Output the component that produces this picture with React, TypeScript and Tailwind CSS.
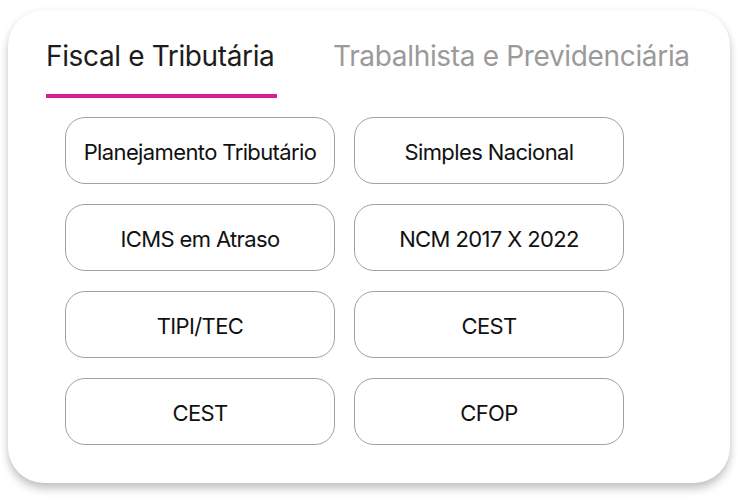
const items = [
  "Planejamento Tributário",
  "Simples Nacional",
  "ICMS em Atraso",
  "NCM 2017 X 2022",
  "TIPI/TEC",
  "CEST",
  "CEST",
  "CFOP",
];

export default function App() {
  return (
    <div className="w-[738px] h-[501px] bg-white pt-[10px] px-[8px] font-['Inter',sans-serif]">
      <div className="h-[473px] rounded-[36px] bg-white shadow-[0_6px_8px_rgba(0,0,0,0.22),0_0_6px_rgba(0,0,0,0.05)] pt-[29px] pl-[38px]">
        <div className="flex items-start gap-[56px]">
          <div className="flex flex-col w-[231px]">
            <span className="text-[28px] leading-[34px] tracking-[-0.013em] whitespace-nowrap text-[#1c1c1c]">Fiscal e Tributária</span>
            <div className="mt-[21px] h-[4px] w-[231px] bg-[#d81b9a]" />
          </div>
          <span className="text-[28px] leading-[34px] tracking-[-0.012em] whitespace-nowrap text-[#9a9a9a]">Trabalhista e Previdenciária</span>
        </div>
        <div className="mt-[19px] ml-[19px] grid grid-cols-[270px_270px] gap-x-[19px] gap-y-[20px]">
          {items.map((label, i) => (
            <button
              key={i}
              className="h-[67px] pt-[3px] rounded-[20px] border border-[#a0a0a0] bg-white text-[22px] tracking-[-0.028em] text-[#111] flex items-center justify-center"
            >
              {label}
            </button>
          ))}
        </div>
      </div>
    </div>
  );
}
